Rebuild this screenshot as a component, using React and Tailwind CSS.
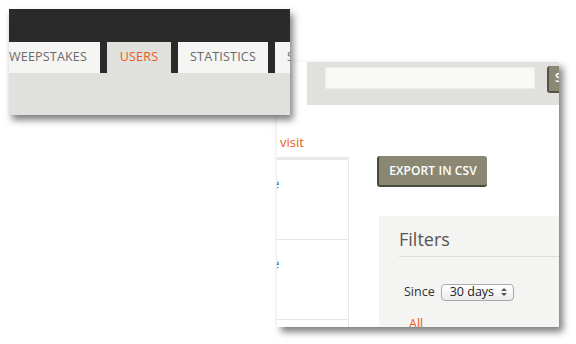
// Two cropped screenshots laid over a white canvas — admin tabs + users page
import React from 'react';

const font = { fontFamily: '"Open Sans", "Liberation Sans", sans-serif' };

function Tab({ label, active, className = '' }) {
  return (
    <div
      className={`h-full shrink-0 flex items-center text-[12.5px] tracking-[0.2px] ${
        active ? 'bg-[#e0e0dc] text-[#ec5a24]' : 'bg-[#f5f5f3] text-[#6a6a6a]'
      } ${className}`}
    >
      {label}
    </div>
  );
}

function TopPanel() {
  return (
    <div className="absolute left-[9px] top-[9px] w-[281px] h-[106px] overflow-hidden flex flex-col shadow-[3px_5px_7px_rgba(0,0,0,0.5)]">
      <div className="h-[33px] shrink-0 bg-[#2b2a2a]" />
      <div className="h-[31px] shrink-0 bg-[#2b2a2a] flex gap-[7px]">
        <Tab label="WEEPSTAKES" className="w-[91px] justify-start" />
        <Tab label="USERS" active className="w-[64px] justify-center" />
        <Tab label="STATISTICS" className="w-[90px] justify-center" />
        <Tab label="SETTINGS" className="w-[60px] justify-start pl-[12px]" />
      </div>
      <div className="flex-1 bg-[#e0e0dc]" />
    </div>
  );
}

function Row() {
  return (
    <div className="h-[80px] shrink-0 border-b border-[#e6e6e6] relative">
      <span className="absolute left-[-5px] top-[14px] text-[13px] text-[#3a6fb0]">e</span>
    </div>
  );
}

function UsersPanel() {
  return (
    <div className="absolute left-[277px] top-[62px] w-[282px] h-[265px] overflow-hidden bg-white flex flex-col shadow-[4px_5px_7px_rgba(0,0,0,0.5)]">
      {/* search strip */}
      <div className="ml-[30px] h-[43px] shrink-0 bg-[#e0e0dc] flex items-start pt-[5px] pl-[18px] gap-[12px]">
        <div className="w-[210px] h-[22px] shrink-0 bg-[#f9f9f8] border border-[#ececea]" />
        <div className="w-[16px] h-[27px] shrink-0 -mt-[1px] rounded-l-[3px] bg-[#8a8873] border-l-2 border-b-2 border-[#55544a] text-white text-[12px] font-semibold pl-[6px] pt-[3px] overflow-hidden">
          S
        </div>
      </div>

      <div className="flex flex-1 min-h-0">
        {/* user list column */}
        <div className="w-[72px] shrink-0 flex flex-col">
          <div className="h-[52px] shrink-0 pt-[29px] pl-[3px] text-[13px] leading-[16px] text-[#ec5a24]">visit</div>
          <div className="flex-1 flex flex-col border-t-[3px] border-r border-[#e8e8e8] overflow-hidden">
            <Row />
            <Row />
            <Row />
          </div>
        </div>

        {/* actions + filters */}
        <div className="flex-1 flex flex-col min-h-0">
          <button className="mt-[51px] ml-[28px] w-[110px] h-[31px] shrink-0 rounded-[3px] bg-[#8a8873] border-l-2 border-b-2 border-[#4a4940] text-[12px] font-semibold text-white tracking-[0.1px]">
            EXPORT IN CSV
          </button>
          <div className="mt-[29px] ml-[30px] flex-1 bg-[#f4f4f2] pl-[20px] overflow-hidden">
            <div className="pt-[11px] h-[41px] border-b border-[#dcdcd8] text-[18px] text-[#555] leading-[24px]">
              Filters
            </div>
            <div className="mt-[26px] flex items-center gap-[6px] pl-[5px] text-[12.5px] text-[#333]">
              <span>Since</span>
              <div className="w-[73px] h-[17px] rounded-[4px] border border-[#a9a9a9] bg-gradient-to-b from-white to-[#ececec] flex items-center justify-between pl-[8px] pr-[6px] text-[12.5px] text-[#222]">
                <span>30 days</span>
                <svg width="6" height="10" viewBox="0 0 6 10">
                  <path d="M0 4 L3 1 L6 4 Z M0 6 L3 9 L6 6 Z" fill="#555" />
                </svg>
              </div>
            </div>
            <div className="mt-[14px] pl-[10px] text-[12.5px] text-[#ec5a24] leading-[16px]">All</div>
          </div>
        </div>
      </div>
    </div>
  );
}

export default function App() {
  return (
    <div className="relative w-[576px] h-[344px] bg-white overflow-hidden" style={font}>
      <UsersPanel />
      <TopPanel />
    </div>
  );
}
